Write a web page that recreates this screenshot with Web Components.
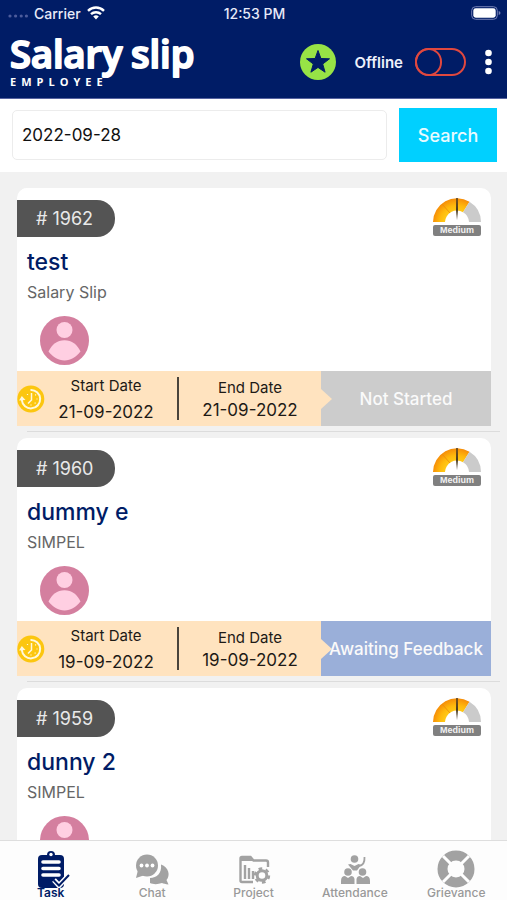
<!DOCTYPE html>
<html lang="en">
<head>
<meta charset="utf-8">
<meta name="viewport" content="width=device-width, initial-scale=1">
<title>Salary slip – Tasks</title>
<style>
  html, body { margin: 0; height: 100%; }
  body { font-family: Inter, "Liberation Sans", sans-serif; background: #f1f1f1; }
</style>
</head>
<body>
<task-app></task-app>

<script>
const define = (name, html, setup) => {
  const tpl = document.createElement('template');
  tpl.innerHTML = html;
  customElements.define(name, class extends HTMLElement {
    constructor() {
      super();
      this.attachShadow({ mode: 'open' }).append(tpl.content.cloneNode(true));
    }
    connectedCallback() { if (setup) setup(this, this.shadowRoot); }
  });
};

/* Status bar */
define('status-bar', `
<style>
  :host { display: grid; grid-template-columns: 1fr auto 1fr; align-items: center; height: 26px; padding: 0 6px 0 8px; font-size: 14px; font-weight: 500; color: #e8eaf8; }
  .left { display: flex; align-items: center; gap: 6px; }
  .right { display: flex; justify-content: flex-end; }
  svg { display: block; }
</style>
<div class="left">
  <svg width="20" height="12" viewBox="0 0 20 12" fill="#4c5c9c"><circle cx="2" cy="9" r="1.600"/><circle cx="7.600" cy="9" r="1.600"/><circle cx="13.200" cy="9" r="1.600"/><circle cx="18.400" cy="9" r="1.600"/></svg>
  <span>Carrier</span>
  <svg width="18" height="14" viewBox="0 0 18 14" fill="none" stroke="#fff" stroke-width="2.400"><path d="M1 4.800a11.500 11.500 0 0 1 16 0M4 8.200a7.200 7.200 0 0 1 10 0"/><path d="M9 13.500 6.200 10.600a4.200 4.200 0 0 1 5.600 0Z" fill="#fff" stroke="none"/></svg>
</div>
<span>12:53 PM</span>
<div class="right">
  <svg width="30" height="14" viewBox="0 0 30 14"><rect x=".7" y=".7" width="25.600" height="12.600" rx="3.800" fill="none" stroke="#7480b5"/><rect x="2.300" y="2.300" width="22.400" height="9.400" rx="2.400" fill="#fff"/><path d="M27.700 5v4q1.800-.6 1.800-2t-1.800-2Z" fill="#7480b5"/></svg>
</div>`);

/* Brand mark */
define('brand-logo', `
<style>
  :host { display: block; }
  svg { display: block; overflow: visible; }
  text { fill: #fff; stroke: #fff; stroke-linejoin: round; font-family: "Open Sans", sans-serif; }
  .word { font-size: 38px; font-weight: 600; stroke-width: 2px; }
  .sub { font-size: 11px; font-weight: 700; stroke-width: 0; letter-spacing: 5px; }
</style>
<svg width="188" height="54" viewBox="0 0 188 54" role="img" aria-label="Salary slip employee">
  <text class="word" x="0" y="33">Salary</text>
  <text class="word" x="121" y="33">slip</text>
  <text class="sub" x="0" y="51">EMPLOYEE</text>
</svg>`);

/* App header */
define('app-header', `
<style>
  :host { display: block; background: #001c66; border-bottom: 1px solid #5663a0; color: #fff; }
  .bar { display: flex; align-items: center; height: 72px; padding: 0 11px 0 10px; box-sizing: border-box; }
  brand-logo { margin-right: auto; }
  button { border: 0; padding: 0; background: none; color: inherit; font: inherit; display: block; }
  label { display: flex; align-items: center; gap: 12px; margin: 0 15px 0 19px; font-size: 15px; font-weight: 600; color: #eef1fb; }
  input { appearance: none; margin: 0; width: 51px; height: 28px; border: 2px solid #e0483f; border-radius: 14px; display: flex; align-items: center; box-sizing: border-box; }
  input::before { content: ""; width: 27px; height: 28px; margin-left: -2px; border: 2px solid #e0483f; border-radius: 14px; box-sizing: border-box; }
  svg { display: block; }
</style>
<status-bar></status-bar>
<div class="bar">
  <brand-logo></brand-logo>
  <button aria-label="Favourites"><svg width="36" height="36" viewBox="0 0 36 36"><circle cx="18" cy="18" r="18" fill="#97e346"/><path d="M18 6.500 20.900 14.500 29.500 14.800 22.700 20 25.100 28.200 18 23.400 10.900 28.200 13.300 20 6.500 14.800 15.100 14.500Z" fill="#001c66" stroke="#001c66" stroke-linejoin="round"/></svg></button>
  <label>Offline <input type="checkbox" role="switch"></label>
  <button aria-label="More options"><svg width="15" height="26" viewBox="0 0 15 26" fill="#fff"><circle cx="7.500" cy="4" r="3.300"/><circle cx="7.500" cy="13" r="3.300"/><circle cx="7.500" cy="22" r="3.300"/></svg></button>
</div>`);

/* Date search */
define('date-search', `
<style>
  :host { display: block; background: #fff; }
  form { display: flex; align-items: center; gap: 12px; padding: 9px 10px 10px 12px; }
  input { flex: 1; min-width: 0; height: 50px; box-sizing: border-box; border: 1px solid #ececec; border-radius: 5px; padding: 0 9px; font: 17px Inter, sans-serif; color: #111; background: #fff; }
  button { width: 98px; height: 54px; border: 0; background: #00d0ff; color: #e8fbff; font: 500 18px Inter, sans-serif; padding: 0; }
</style>
<form onsubmit="return false">
  <input type="text" value="2022-09-28" aria-label="Date">
  <button type="submit">Search</button>
</form>`);

/* Priority gauge */
define('priority-gauge', `
<style>
  :host { display: block; width: 50px; }
  svg { display: block; }
  span { display: block; margin: 2px 1px 0; height: 11px; border-radius: 2px; background: #808080; color: #f2f2f2; font: 700 9px/11px "Liberation Sans", sans-serif; text-align: center; }
</style>
<svg width="50" height="26" viewBox="0 0 50 26">
  <defs><radialGradient id="g" gradientUnits="userSpaceOnUse" cx="25" cy="26" r="25"><stop offset=".45" stop-color="#ffcc18"/><stop offset=".7" stop-color="#ffb90c"/><stop offset="1" stop-color="#f58a08"/></radialGradient></defs>
  <path d="M1 25a24 24 0 0 1 36.500-20.300L31 15.200A12 12 0 0 0 13 25Z" fill="url(#g)"/>
  <path d="M37.500 4.700A24 24 0 0 1 49 25H37A12 12 0 0 0 31 15.200Z" fill="#cbcbcb"/>
  <path d="M10 7 18 16M25 1V13" stroke="#e88a10" stroke-width=".8"/>
  <path d="M24.300 1h1.400l.3 12-1 10-1-10Z" fill="#4a3a22"/>
</svg>
<span><slot></slot></span>`);

/* Task card; the date strip is left out for a task that has no dates */
define('task-card', `
<style>
  :host { display: block; padding: 0 16px 0 17px; }
  article { background: #fff; border-radius: 10px 10px 0 0; }
  .body { padding-top: 12px; height: 183px; box-sizing: border-box; display: flex; flex-direction: column; align-items: flex-start; }
  .top { display: flex; justify-content: space-between; align-items: flex-start; width: 100%; height: 37px; }
  priority-gauge { margin: -3px 9px 0 0; }
  .id { background: #545454; color: #e9e9e9; height: 37px; width: 98px; box-sizing: border-box; line-height: 37px; padding-left: 19px; border-radius: 0 18px 18px 0; font-size: 18px; }
  h2 { margin: 10px 10px 0; font-size: 23px; line-height: 30px; font-weight: 500; color: #001c66; }
  p { margin: 5px 10px 0; font-size: 16px; line-height: 20px; color: #666; }
  .avatar { display: block; margin: 14px 0 0 23px; }
  footer { display: flex; height: 55px; background: #ffe3bf; color: #222; }
  .dates { flex: 304; display: flex; align-items: center; min-width: 0; }
  .date { flex: 142; display: flex; flex-direction: column; align-items: center; gap: 2px; font-size: 17px; line-height: 20px; color: #1d1a16; }
  .date b { font-weight: 400; font-size: 15px; line-height: 20px; }
  .date.start { flex: 122; gap: 6px; margin-right: 10px; }
  .sep { width: 2px; height: 43px; background: #4a443c; }
  .status { flex: 170; position: relative; display: flex; align-items: center; justify-content: center; background: var(--status, #ccc); color: #fafafa; font-size: 17px; font-weight: 500; white-space: nowrap; }
  .status::before { content: ""; position: absolute; left: 0; top: 18px; border: solid transparent; border-width: 10px 0 10px 11px; border-left-color: #ffe3bf; }
  .status slot { position: relative; display: block; }
  hr { border: 0; height: 1px; background: #dcdcdc; margin: 5px -9px 6px 10px; }
</style>
<article>
  <div class="body">
    <div class="top"><div class="id"># <slot name="id"></slot></div><priority-gauge>Medium</priority-gauge></div>
    <h2><slot name="title"></slot></h2>
    <p><slot name="company"></slot></p>
    <svg class="avatar" width="49" height="49" viewBox="0 0 49 49"><circle cx="24.500" cy="24.500" r="24.500" fill="#d47f9f"/><circle cx="24.500" cy="14" r="8" fill="#ffcfe2"/><path d="M8.500 35.500C12 28.500 17 24.300 24.500 24.300S37 28.500 40.500 35.500C36 41 31 44.500 24.500 44.500S13 41 8.500 35.500Z" fill="#ffcfe2"/></svg>
  </div>
  <footer>
    <div class="dates">
      <svg width="28" height="28" viewBox="0 0 28 28" fill="none" stroke="#fff8dc"><circle cx="13.800" cy="14" r="13.500" fill="#fcc60f" stroke="none"/><path d="M13.500 5a9.200 9.200 0 1 1-8.700 10" stroke-width="2"/><path d="M2 15.500 4.800 11 8.500 15Z" fill="#fff8dc" stroke="none"/><path d="M14.500 8v7l-3.500 3.500" stroke-width="1.500"/><path d="M10.500 9v1M19 9.500l-.8.800M20.500 14h-1M18.500 18.500l-.8-.8M14 20.500v-1" stroke-width="1.200"/></svg>
      <div class="date start"><b>Start Date</b><slot name="start"></slot></div>
      <span class="sep"></span>
      <div class="date"><b>End Date</b><slot name="end"></slot></div>
    </div>
    <div class="status"><slot name="status"></slot></div>
  </footer>
</article>
<hr>`,
(el, root) => { root.querySelector('footer').style.display = el.hasAttribute('undated') ? 'none' : ''; });

/* Tab bar */
const icons = {
  task: '<rect x="5" y="5" width="26" height="33" rx="4" fill="#001c66"/><circle cx="18" cy="5" r="3" fill="#001c66" stroke="#001c66" stroke-width="2"/><circle cx="18" cy="4.500" r="1.700" fill="#fff"/><path d="M10 12h16M10 18.500h16M10 25h16" stroke="#fff" stroke-width="3.600" stroke-linecap="round"/><path d="m21 30 5 5.500 10-10.500" fill="none" stroke="#fff" stroke-width="5"/><path d="m20.500 30 5.500 5.500 10-10.500" fill="none" stroke="#001c66" stroke-width="2"/>',
  chat: '<circle cx="13" cy="15.500" r="11" fill="#a2a2a2"/><path d="m4 20-2 8 9-3Z" fill="#a2a2a2"/><g fill="#fff"><circle cx="7.500" cy="15.500" r="1.900"/><circle cx="13" cy="15.500" r="1.900"/><circle cx="18.500" cy="15.500" r="1.900"/></g><path d="M27 14.500c8 3 9.500 11 5.500 15.500l2 4.500c-3-.3-5-1-6.500-1.500-4 1.500-9 1.500-12 0v-5C23 28 28 23 27 14.500Z" fill="#a2a2a2"/>',
  project: '<path d="M17 32H6Q4.500 32 4.500 30.500V8.500Q4.500 7 6 7h8.500l3 3.500h12.500q2 0 2 2V17" fill="none" stroke="#a2a2a2" stroke-width="2.400"/><path d="M5 7h9.500l3 4H5Z" fill="#a2a2a2"/><path d="M9 15v14M13 18v11M17 21v8" stroke="#a2a2a2" stroke-width="2.400"/><circle cx="26" cy="25.500" r="4.800" fill="none" stroke="#a2a2a2" stroke-width="3"/><circle cx="26" cy="25.500" r="7" fill="none" stroke="#a2a2a2" stroke-width="2.400" stroke-dasharray="3.670 3.660"/>',
  attendance: '<g fill="#a2a2a2"><circle cx="17.500" cy="9" r="3.800"/><circle cx="11" cy="22" r="3.800"/><circle cx="25.500" cy="22" r="3.800"/><path d="M4 34v-3q0-5 4-5l3 2 3-2q3 0 3.500 3v5ZM19.500 34v-5q.5-3 3.500-3l3 2 3-2q4 0 4 5v3Z"/><path d="m11 14.500 2.500-.5 4 2 4-2 2.500 1-4 5.500h-4Z"/></g><path d="M22 16q6-1 5.500-9" fill="none" stroke="#a2a2a2" stroke-width="1.800"/>',
  grievance: '<circle cx="18" cy="19" r="13.500" fill="none" stroke="#a2a2a2" stroke-width="10"/><path d="m5 6 7.500 7.500M31 6l-7.500 7.500M5 32l7.500-7.500M31 32l-7.500-7.500" stroke="#fff" stroke-width="3"/>'
};
define('tab-item', `
<style>
  :host { display: block; flex: 1; }
  a { display: flex; flex-direction: column; align-items: center; color: #999; text-decoration: none; font-size: 12px; line-height: 14px; font-weight: 500; }
  :host([active]) a { color: #001c66; font-weight: 600; }
  svg { display: block; overflow: visible; }
</style>
<a href="#"><svg width="36" height="36" viewBox="0 0 36 36"></svg><slot></slot></a>`,
(el, root) => { root.querySelector('svg').innerHTML = icons[el.getAttribute('icon')]; });

define('tab-bar', `
<style>
  :host { display: block; background: #fdfdfd; border-top: 1px solid #dedede; }
  nav { display: flex; padding: 9px 0 0; height: 59px; box-sizing: border-box; }
</style>
<nav>
  <tab-item icon="task" active>Task</tab-item>
  <tab-item icon="chat">Chat</tab-item>
  <tab-item icon="project">Project</tab-item>
  <tab-item icon="attendance">Attendance</tab-item>
  <tab-item icon="grievance">Grievance</tab-item>
</nav>`);

define('task-app', `
<style>
  :host { display: flex; flex-direction: column; height: 100vh; overflow: hidden; background: #f1f1f1; }
  main { flex: 1; min-height: 0; overflow: hidden; padding-top: 16px; }
  .feedback { --status: #9aafd9; }
</style>
<app-header></app-header>
<date-search></date-search>
<main>
  <task-card><span slot="id">1962</span><span slot="title">test</span><span slot="company">Salary Slip</span><span slot="start">21-09-2022</span><span slot="end">21-09-2022</span><span slot="status">Not Started</span></task-card>
  <task-card class="feedback"><span slot="id">1960</span><span slot="title">dummy e</span><span slot="company">SIMPEL</span><span slot="start">19-09-2022</span><span slot="end">19-09-2022</span><span slot="status">Awaiting Feedback</span></task-card>
  <task-card undated><span slot="id">1959</span><span slot="title">dunny 2</span><span slot="company">SIMPEL</span></task-card>
</main>
<tab-bar></tab-bar>`);
</script>
</body>
</html>
